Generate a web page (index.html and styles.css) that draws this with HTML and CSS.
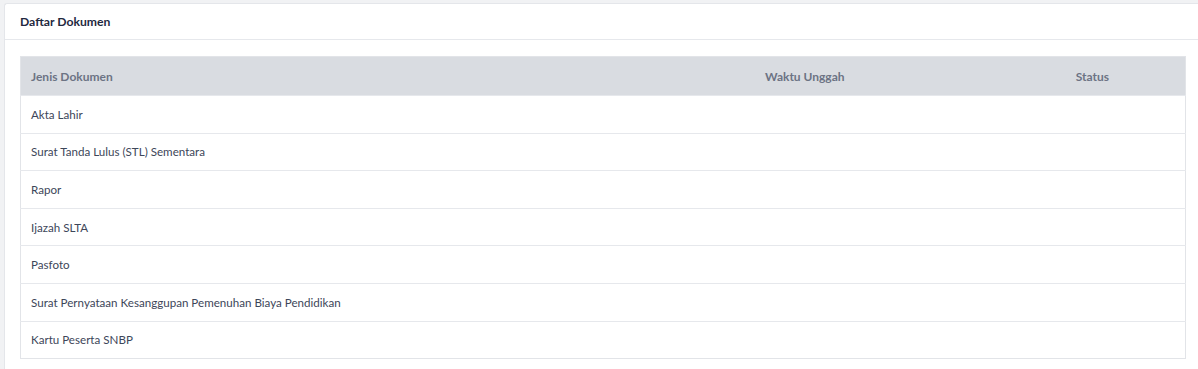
FILE: index.html
```html
<!DOCTYPE html>
<html lang="id">
<head>
    <meta charset="UTF-8">
    <meta name="viewport" content="width=device-width, initial-scale=1.0">
    <title>Daftar Dokumen</title>
    <link rel="stylesheet" href="styles.css">
</head>
<body>
    <section class="card">
        <div class="card-header">
            <h2>Daftar Dokumen</h2>
        </div>

        <div class="card-body">
            <table class="doc-table">
                <colgroup>
                    <col class="col-jenis">
                    <col class="col-waktu">
                    <col class="col-status">
                </colgroup>
                <thead>
                    <tr>
                        <th>Jenis Dokumen</th>
                        <th class="center">Waktu Unggah</th>
                        <th class="center">Status</th>
                    </tr>
                </thead>
                <tbody>
                    <tr><td>Akta Lahir</td><td></td><td></td></tr>
                    <tr><td>Surat Tanda Lulus (STL) Sementara</td><td></td><td></td></tr>
                    <tr><td>Rapor</td><td></td><td></td></tr>
                    <tr><td>Ijazah SLTA</td><td></td><td></td></tr>
                    <tr><td>Pasfoto</td><td></td><td></td></tr>
                    <tr><td>Surat Pernyataan Kesanggupan Pemenuhan Biaya Pendidikan</td><td></td><td></td></tr>
                    <tr><td>Kartu Peserta SNBP</td><td></td><td></td></tr>
                </tbody>
            </table>
        </div>
    </section>
</body>
</html>
```

FILE: styles.css
```css
body {
    font-family: Lato, 'Open Sans', sans-serif;
    margin: 0;
    padding: 3px 0 0 4px;
    background-color: #f1f2f4;
    color: #3b4256;
    overflow: hidden;
}

.card {
    width: 1198px;
    background-color: #fff;
    border: 1px solid #e4e6ea;
    border-right: none;
    border-radius: 3px 0 0 0;
}

.card-header {
    padding: 0 15px;
    height: 35px;
    display: flex;
    align-items: center;
    border-bottom: 1px solid #e6e8ec;
}

.card-header h2 {
    margin: 0;
    font-size: 12.2px;
    font-weight: 700;
    color: #1f2940;
}

.card-body {
    padding: 16px 15px;
}

.doc-table {
    width: 1166px;
    border-collapse: collapse;
    border: 1px solid #e2e4e8;
    font-size: 12px;
}

.col-jenis { width: 590px; }
.col-waktu { width: 390px; }
.col-status { width: 186px; }

.doc-table th {
    background-color: #d9dce1;
    color: #6c7384;
    font-weight: 700;
    text-align: left;
    height: 38px;
    padding: 0 10px;
}

.doc-table th.center {
    text-align: center;
}

.doc-table td {
    height: 36.6px;
    padding: 0 10px;
    border-top: 1px solid #e6e8ec;
    font-size: 11.6px;
    color: #3d4659;
}
```
